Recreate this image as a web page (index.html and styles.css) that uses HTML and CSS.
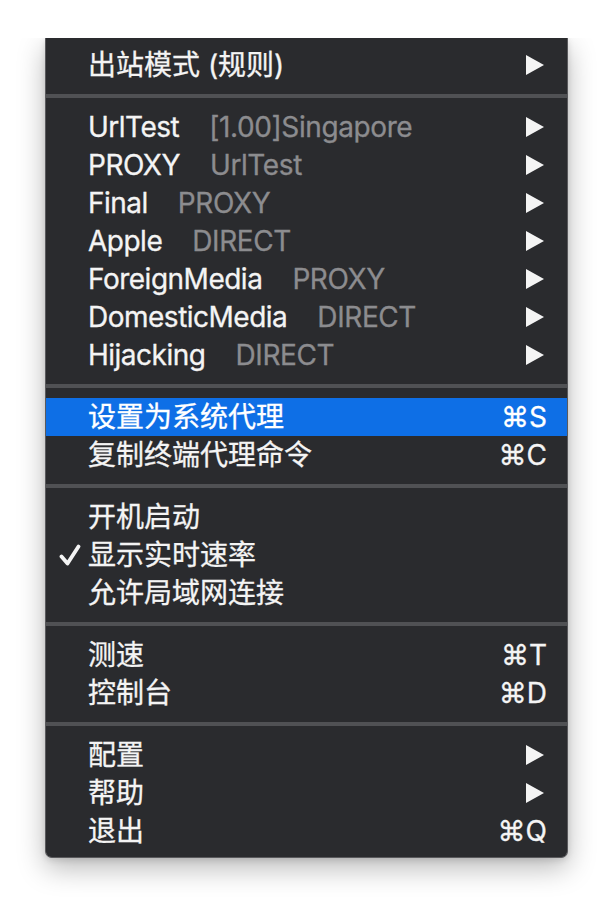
FILE: index.html
```html
<!DOCTYPE html>
<html lang="zh">
<head>
<meta charset="utf-8">
<link rel="stylesheet" href="styles.css">
</head>
<body>
<div class="menu">
  <div class="row"><span class="check"></span><span class="label">出站模式 (规则)</span><span class="fill"></span><svg class="arrow" viewBox="0 0 18 20"><path d="M0 0L18 10L0 20Z"/></svg></div>
  <div class="sep"></div>
  <div class="row"><span class="check"></span><span class="label latin">UrlTest</span><span class="sub">[1.00]Singapore</span><span class="fill"></span><svg class="arrow" viewBox="0 0 18 20"><path d="M0 0L18 10L0 20Z"/></svg></div>
  <div class="row"><span class="check"></span><span class="label latin">PROXY</span><span class="sub">UrlTest</span><span class="fill"></span><svg class="arrow" viewBox="0 0 18 20"><path d="M0 0L18 10L0 20Z"/></svg></div>
  <div class="row"><span class="check"></span><span class="label latin">Final</span><span class="sub">PROXY</span><span class="fill"></span><svg class="arrow" viewBox="0 0 18 20"><path d="M0 0L18 10L0 20Z"/></svg></div>
  <div class="row"><span class="check"></span><span class="label latin">Apple</span><span class="sub">DIRECT</span><span class="fill"></span><svg class="arrow" viewBox="0 0 18 20"><path d="M0 0L18 10L0 20Z"/></svg></div>
  <div class="row"><span class="check"></span><span class="label latin">ForeignMedia</span><span class="sub">PROXY</span><span class="fill"></span><svg class="arrow" viewBox="0 0 18 20"><path d="M0 0L18 10L0 20Z"/></svg></div>
  <div class="row"><span class="check"></span><span class="label latin">DomesticMedia</span><span class="sub">DIRECT</span><span class="fill"></span><svg class="arrow" viewBox="0 0 18 20"><path d="M0 0L18 10L0 20Z"/></svg></div>
  <div class="row"><span class="check"></span><span class="label latin">Hijacking</span><span class="sub">DIRECT</span><span class="fill"></span><svg class="arrow" viewBox="0 0 18 20"><path d="M0 0L18 10L0 20Z"/></svg></div>
  <div class="sep"></div>
  <div class="row active"><span class="check"></span><span class="label">设置为系统代理</span><span class="fill"></span><span class="key">⌘S</span></div>
  <div class="row"><span class="check"></span><span class="label">复制终端代理命令</span><span class="fill"></span><span class="key">⌘C</span></div>
  <div class="sep"></div>
  <div class="row"><span class="check"></span><span class="label">开机启动</span></div>
  <div class="row"><span class="check"><svg class="tick" viewBox="0 0 22 22"><path d="M2.5 12.5L8.5 19.5L19.5 2.5"/></svg></span><span class="label">显示实时速率</span></div>
  <div class="row"><span class="check"></span><span class="label">允许局域网连接</span></div>
  <div class="sep"></div>
  <div class="row"><span class="check"></span><span class="label">测速</span><span class="fill"></span><span class="key">⌘T</span></div>
  <div class="row"><span class="check"></span><span class="label">控制台</span><span class="fill"></span><span class="key">⌘D</span></div>
  <div class="sep"></div>
  <div class="row"><span class="check"></span><span class="label">配置</span><span class="fill"></span><svg class="arrow" viewBox="0 0 18 20"><path d="M0 0L18 10L0 20Z"/></svg></div>
  <div class="row"><span class="check"></span><span class="label">帮助</span><span class="fill"></span><svg class="arrow" viewBox="0 0 18 20"><path d="M0 0L18 10L0 20Z"/></svg></div>
  <div class="row"><span class="check"></span><span class="label">退出</span><span class="fill"></span><span class="key">⌘Q</span></div>
</div>
</body>
</html>
```
FILE: styles.css
```css
html, body {
  margin: 0;
  padding: 0;
  background: #ffffff;
}
body {
  width: 614px;
  height: 912px;
  overflow: hidden;
  padding-top: 38px;
  box-sizing: border-box;
}
.menu {
  margin-left: 45px;
  width: 523px;
  box-sizing: border-box;
  background: #2a2b2e;
  border: 1px solid #5a5a5d;
  border-top: none;
  border-radius: 0 0 7px 7px;
  padding: 8px 0 7px;
  box-shadow: 0 10px 28px rgba(0, 0, 0, 0.28), 0 2px 6px rgba(0, 0, 0, 0.12);
  clip-path: inset(0 -60px -80px -60px);
  font-family: "Inter", "Noto Sans CJK SC", sans-serif;
  font-size: 28px;
  color: #f4f4f4;
  -webkit-text-stroke: 0.3px currentColor;
}
.row {
  display: flex;
  align-items: center;
  height: 38px;
  padding: 0 20px 0 12px;
  white-space: nowrap;
}
.row.active {
  background: #0e6fe6;
  color: #ffffff;
}
.check {
  width: 30px;
  flex: none;
  display: flex;
  align-items: center;
}
.tick {
  width: 22px;
  height: 22px;
  margin-left: 1px;
  fill: none;
  stroke: #f4f4f4;
  stroke-width: 3.8;
  stroke-linecap: round;
  stroke-linejoin: round;
}
.label {
  line-height: 38px;
}
.latin {
  letter-spacing: -0.5px;
}
.sub {
  margin-left: 30px;
  color: #8c8c8f;
  line-height: 38px;
  letter-spacing: -0.4px;
}
.fill {
  flex: 1;
}
.arrow {
  width: 18px;
  height: 20px;
  margin-right: 3px;
  fill: #f4f4f4;
  flex: none;
}
.key {
  font-family: "Inter", "DejaVu Sans", sans-serif;
  line-height: 38px;
}
.sep {
  height: 4px;
  margin: 10px 0;
  background: #505154;
}
```
